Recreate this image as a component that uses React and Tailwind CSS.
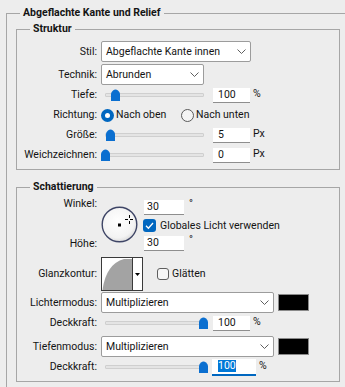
import React from 'react';

const Label = ({ children }) => (
  <div className="w-[80px] shrink-0 text-right whitespace-nowrap">{children}</div>
);

const Chevron = () => (
  <svg width="9" height="5" viewBox="0 0 9 5" className="shrink-0">
    <polyline points="0.5,0.5 4.5,4.5 8.5,0.5" fill="none" stroke="#5f5f5f" strokeWidth="1" />
  </svg>
);

const Select = ({ value, width }) => (
  <div className={`${width} h-[21px] ml-[4px] bg-white border border-[#9c9c9c] rounded-[2px] flex items-center pl-[4px] pr-[4px]`}>
    <span className="flex-1 whitespace-nowrap">{value}</span>
    <Chevron />
  </div>
);

const Thumb = ({ pos }) => (
  <svg width="9" height="12" viewBox="0 0 9 12" className={`absolute top-1/2 -translate-y-1/2 ${pos}`}>
    <path d="M0,12 V5 Q0,3.2 2,1.6 Q4.5,-0.4 7,1.6 Q9,3.2 9,5 V12 Z" fill="#0b6fd0" />
  </svg>
);

const Slider = ({ pos }) => (
  <div className="relative w-[104px] h-full ml-[4px] flex items-center pl-[4px] pr-[1px]">
    <div className="flex-1 h-[4px] bg-[#e4e4e4] border border-[#cfcfcf] rounded-[1px]" />
    <Thumb pos={pos} />
  </div>
);

const NumBox = ({ value, focused }) =>
  focused ? (
    <div className="w-[38px] h-[15px] ml-[7px] bg-white border-b-2 border-[#0067c0] flex items-center pl-[6px] box-content">
      <span className="bg-[#0078d7] text-white leading-[12px] px-[0px]">{value}</span>
    </div>
  ) : (
    <div className="w-[37px] h-[15px] ml-[8px] bg-white border-b border-[#8e8e8e] flex items-center pl-[5px]">
      {value}
    </div>
  );

const Unit = ({ children }) => <span className="ml-[3px] -mt-[2px]">{children}</span>;

const Radio = ({ checked }) =>
  checked ? (
    <div className="w-[13px] h-[13px] rounded-full bg-[#0067c0] flex items-center justify-center shrink-0">
      <div className="w-[5px] h-[5px] rounded-full bg-white" />
    </div>
  ) : (
    <div className="w-[13px] h-[13px] rounded-full border border-[#5a5a5a] bg-[#f4f4f4] shrink-0" />
  );

const Checkbox = ({ checked }) =>
  checked ? (
    <div className="w-[13px] h-[13px] rounded-[3px] bg-[#0067c0] flex items-center justify-center shrink-0">
      <svg width="13" height="13" viewBox="0 0 13 13">
        <polyline points="3,6.8 5.4,9.2 10,4" fill="none" stroke="#fff" strokeWidth="1.3" />
      </svg>
    </div>
  ) : (
    <div className="w-[12px] h-[12px] rounded-[3px] border border-[#5e5e5e] bg-[#f6f6f6] shrink-0" />
  );

const Dial = () => (
  <svg width="37" height="37" viewBox="0 0 37 37" className="ml-[4px] self-center shrink-0">
    <defs>
      <radialGradient id="dialFill" cx="45%" cy="40%" r="60%">
        <stop offset="0%" stopColor="#ffffff" />
        <stop offset="80%" stopColor="#f3f3f3" />
        <stop offset="100%" stopColor="#dcdcdc" />
      </radialGradient>
    </defs>
    <circle cx="18.5" cy="18.5" r="17.3" fill="url(#dialFill)" stroke="#3e4566" strokeWidth="1.4" />
    <rect x="17" y="17.5" width="3" height="3" fill="#000" />
    <g stroke="#000" strokeWidth="1">
      <line x1="24" y1="13.5" x2="27" y2="13.5" />
      <line x1="29" y1="13.5" x2="32" y2="13.5" />
      <line x1="28.5" y1="9" x2="28.5" y2="12" />
      <line x1="28.5" y1="15" x2="28.5" y2="18" />
    </g>
  </svg>
);

const Contour = () => (
  <div className="ml-[4px] w-[42px] h-[34px] border border-[#3a3a3a] bg-white flex shrink-0">
    <svg width="30" height="32" viewBox="0 0 30 32" className="shrink-0">
      <path d="M0.5,32 Q4,6 22,1 L30,1 L30,32 Z" fill="#a3a3a3" />
    </svg>
    <div className="w-px bg-[#3a3a3a]" />
    <div className="flex-1 flex items-center justify-center">
      <svg width="5" height="3" viewBox="0 0 5 3">
        <polygon points="0,0 5,0 2.5,3" fill="#000" />
      </svg>
    </div>
  </div>
);

const Swatch = () => (
  <div className="ml-[4px] w-[31px] h-[17px] bg-black border border-[#8a8a8a]" />
);

export default function App() {
  return (
    <div className="w-[345px] h-[387px] overflow-hidden bg-[#ededed] text-[#141414] text-[10.5px] leading-[14px] font-[Roboto,sans-serif] pl-[6px] pt-[6px]">
      <fieldset className="border-t border-l border-[#a6a6a6] min-h-[420px] min-w-0">
        <legend className="ml-[13px] px-[3px] font-bold leading-[14px]">Abgeflachte Kante und Relief</legend>

        <fieldset className="ml-[9px] mt-[2px] w-[324px] border border-[#a6a6a6] pt-[5px] pb-[4px] min-w-0">
          <legend className="ml-[13px] px-[3px] font-bold leading-[14px]">Struktur</legend>

          <div className="flex items-center h-[21px]">
            <Label>Stil:</Label>
            <Select value="Abgeflachte Kante innen" width="w-[150px]" />
          </div>
          <div className="flex items-center h-[21px] mt-[2px]">
            <Label>Technik:</Label>
            <Select value="Abrunden" width="w-[103px]" />
          </div>
          <div className="flex items-center h-[20px]">
            <Label>Tiefe:</Label>
            <Slider pos="left-[10px]" />
            <NumBox value="100" />
            <Unit>%</Unit>
          </div>
          <div className="flex items-center h-[20px]">
            <Label>Richtung:</Label>
            <div className="ml-[4px] w-[80px] flex items-center gap-[2px]">
              <Radio checked />
              <span>Nach oben</span>
            </div>
            <div className="flex items-center gap-[2px]">
              <Radio />
              <span>Nach unten</span>
            </div>
          </div>
          <div className="flex items-center h-[20px]">
            <Label>Größe:</Label>
            <Slider pos="left-[5px]" />
            <NumBox value="5" />
            <Unit>Px</Unit>
          </div>
          <div className="flex items-center h-[20px]">
            <Label>Weichzeichnen:</Label>
            <Slider pos="left-[0px]" />
            <NumBox value="0" />
            <Unit>Px</Unit>
          </div>
        </fieldset>

        <fieldset className="ml-[9px] mt-[10px] w-[324px] border border-[#a6a6a6] pt-[3px] pb-[4px] min-w-0">
          <legend className="ml-[13px] px-[3px] font-bold leading-[14px]">Schattierung</legend>

          <div className="flex h-[54px]">
            <div className="w-[80px] shrink-0 flex flex-col justify-between text-right">
              <div>Winkel:</div>
              <div>Höhe:</div>
            </div>
            <Dial />
            <div className="ml-[6px] pt-[3px] flex flex-col">
              <div className="flex h-[15px]">
                <div className="w-[40px] h-[15px] bg-white border-b border-[#8e8e8e] pl-[3px] flex items-center">30</div>
                <span className="ml-[5px] -mt-[3px]">°</span>
              </div>
              <div className="flex items-center h-[15px] mt-[3px] -ml-[1px] gap-[4px]">
                <Checkbox checked />
                <span className="whitespace-nowrap">Globales Licht verwenden</span>
              </div>
              <div className="flex h-[15px] mt-[3px]">
                <div className="w-[40px] h-[15px] bg-white border-b border-[#8e8e8e] pl-[3px] flex items-center">30</div>
                <span className="ml-[5px] -mt-[3px]">°</span>
              </div>
            </div>
          </div>

          <div className="flex items-center h-[34px] mt-[6px]">
            <Label>Glanzkontur:</Label>
            <Contour />
            <div className="ml-[14px] flex items-center gap-[3px]">
              <Checkbox />
              <span>Glätten</span>
            </div>
          </div>

          <div className="flex items-center h-[21px] mt-[1px]">
            <Label>Lichtermodus:</Label>
            <Select value="Multiplizieren" width="w-[173px]" />
            <Swatch />
          </div>
          <div className="flex items-center h-[20px]">
            <Label>Deckkraft:</Label>
            <Slider pos="left-[98px]" />
            <NumBox value="100" />
            <Unit>%</Unit>
          </div>
          <div className="flex items-center h-[21px] mt-[3px]">
            <Label>Tiefenmodus:</Label>
            <Select value="Multiplizieren" width="w-[173px]" />
            <Swatch />
          </div>
          <div className="flex items-center h-[20px]">
            <Label>Deckkraft:</Label>
            <Slider pos="left-[98px]" />
            <NumBox value="100" focused />
            <Unit>%</Unit>
          </div>
        </fieldset>
      </fieldset>
    </div>
  );
}
